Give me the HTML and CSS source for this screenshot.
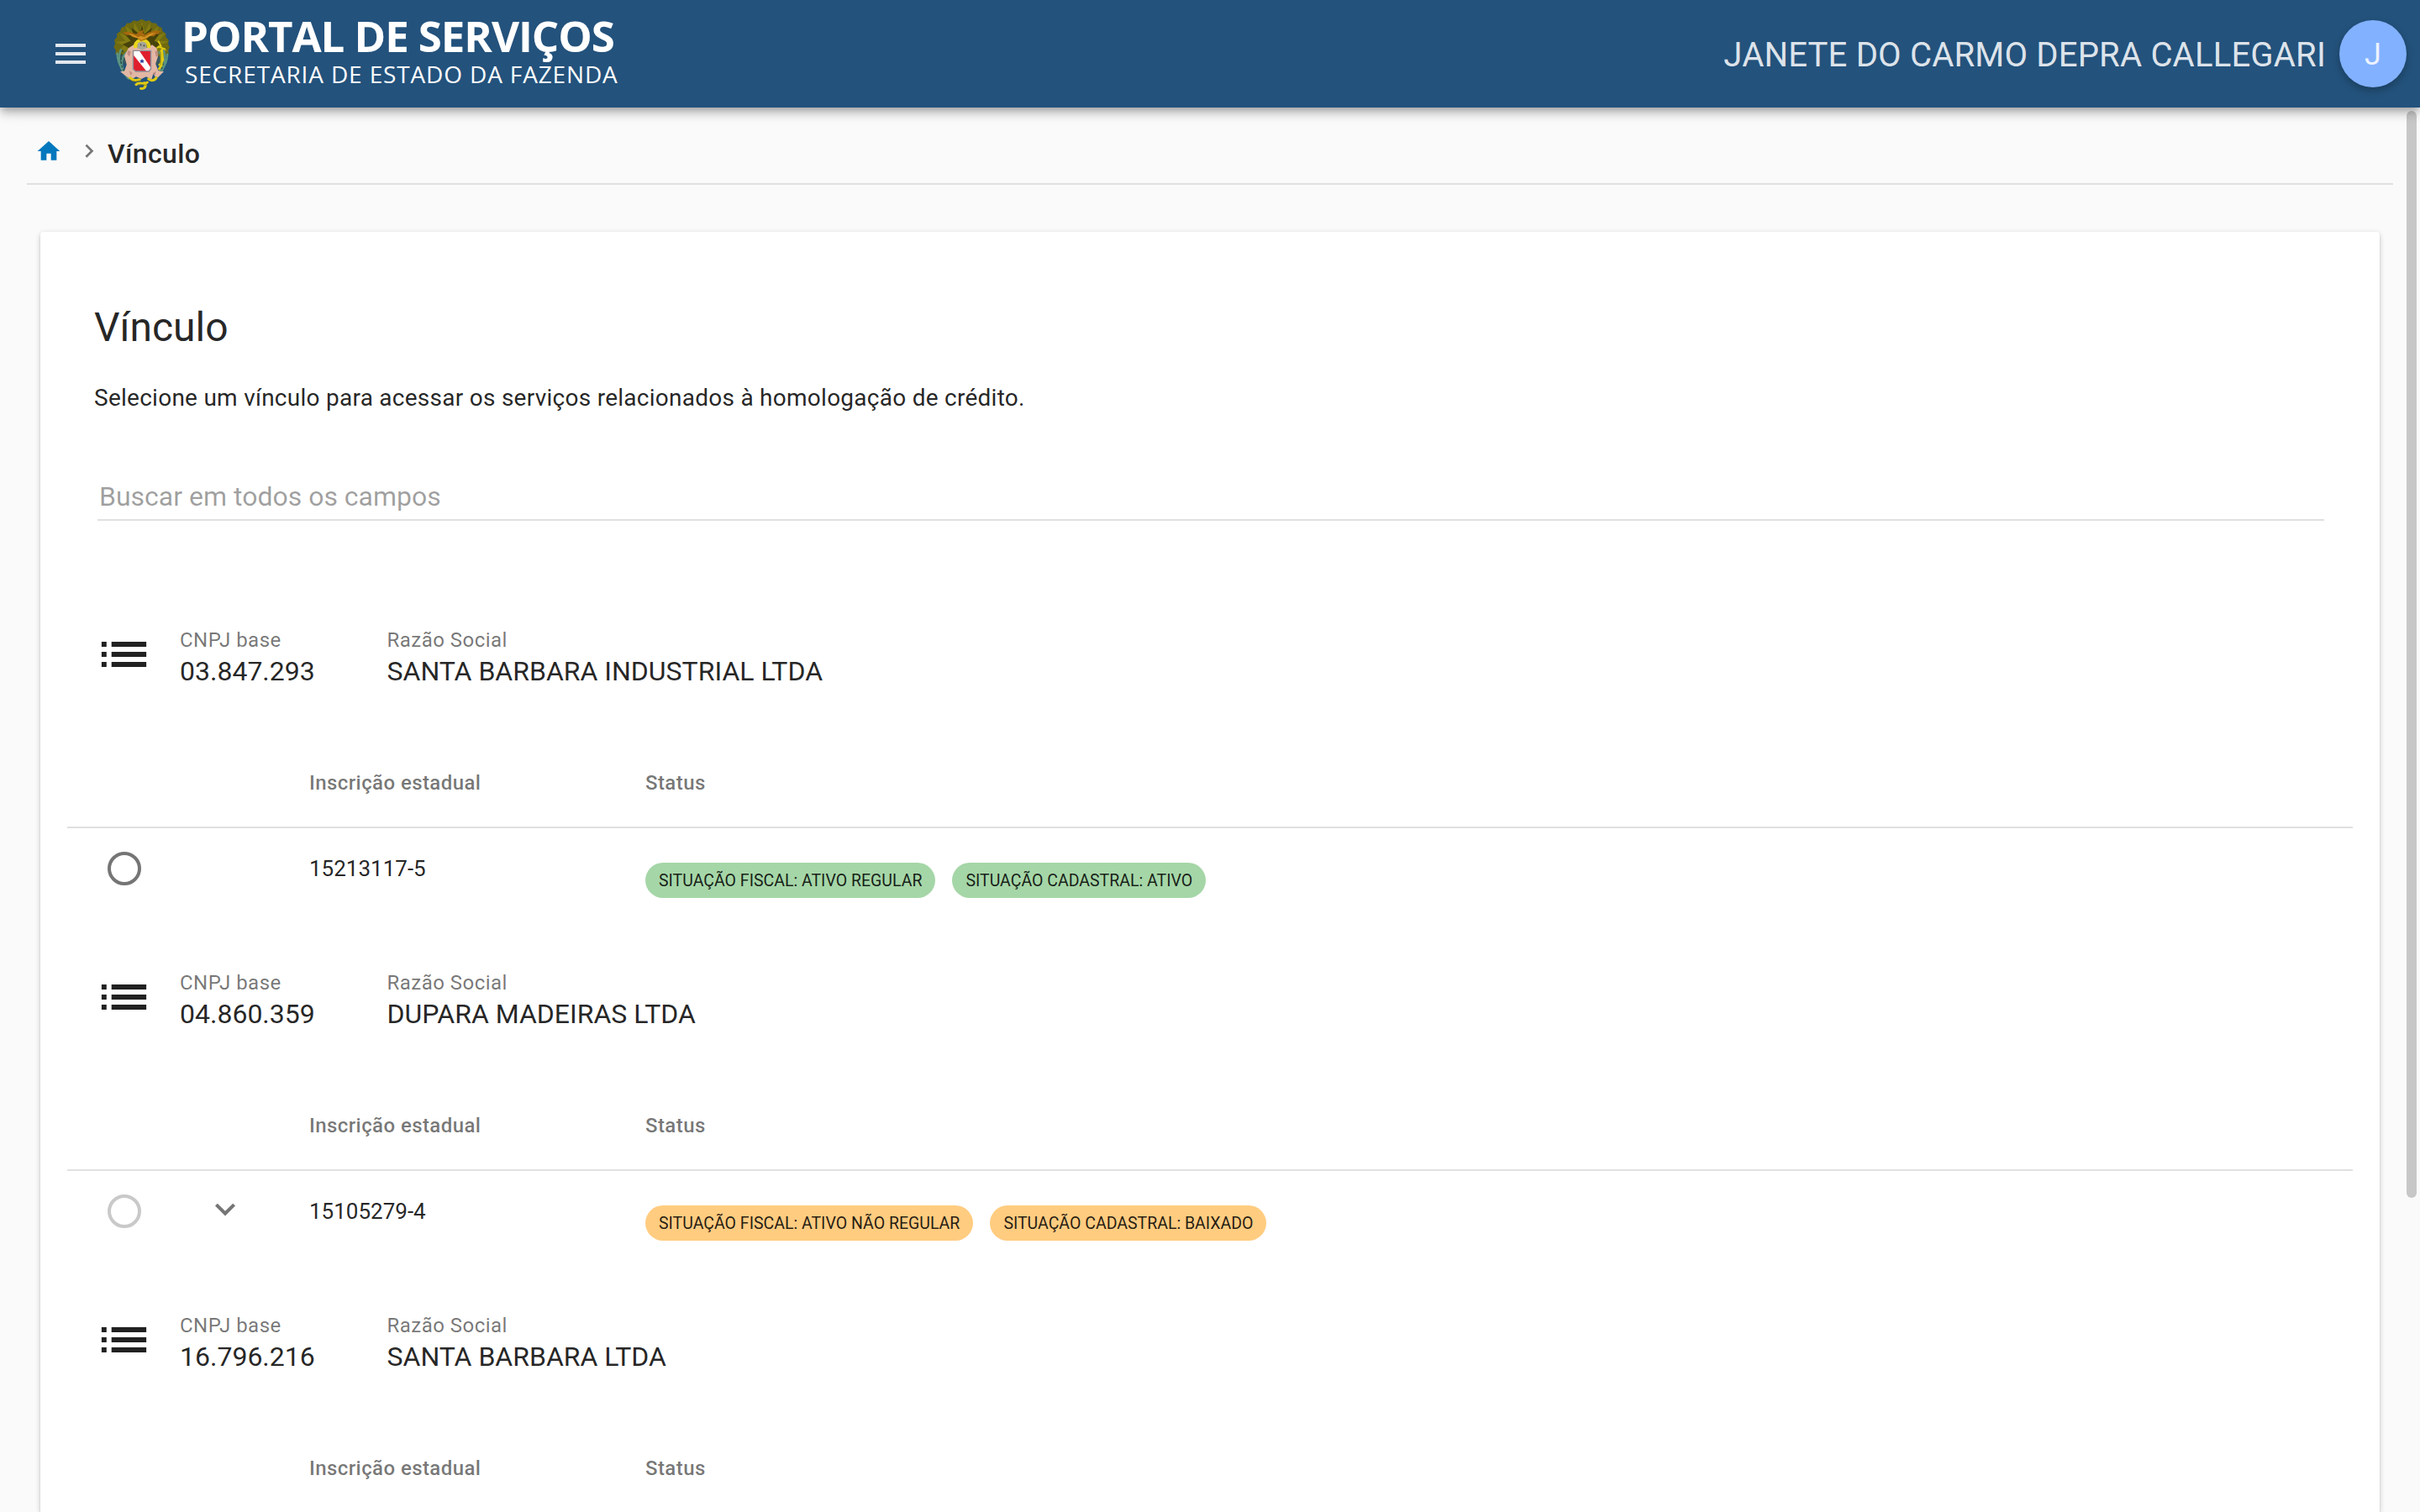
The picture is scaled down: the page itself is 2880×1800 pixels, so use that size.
FILE: index.html
```html
<!DOCTYPE html>
<html lang="pt-BR">
<head>
<meta charset="utf-8">
<title>Portal de Serviços</title>
<link rel="stylesheet" href="styles.css">
</head>
<body>
<svg class="defs" width="0" height="0">
  <symbol id="list" viewBox="0 0 24 24"><path d="M3 13h2v-2H3v2zm0 4h2v-2H3v2zm0-8h2V7H3v2zm4 4h14v-2H7v2zm0 4h14v-2H7v2zM7 7v2h14V7H7z"/></symbol>
</svg>
<header class="toolbar">
  <svg class="menu" viewBox="0 0 24 24"><path d="M3 18h18v-2H3v2zm0-5h18v-2H3v2zm0-7v2h18V6H3z"/></svg>
  <svg class="crest" viewBox="6 0 228 315" preserveAspectRatio="none">
    <path fill="#6f6a10" d="M120 38l12 8 13-3 9 9 14 1 6 11 13 5 3 13 11 8 0 13 10 10-3 13 6 12-5 12 2 13-8 10-4 14-14 9-22 8H76l-20-9-13-9-4-14-9-9 1-13-7-12 5-12-3-13 9-10 0-13 11-8 4-13 12-5 6-11 14-1 9-9 13 3z"/>
    <path fill="#8f8614" d="M120 46l9 40 18-36 2 38 28-26-12 38 34-12-22 28 34 2-30 14 30 22H38l22-22-30-12 34-4-22-28 34 12-12-38 28 26 2-38 18 36z" opacity=".65"/>
    <path fill="#2e2b08" d="M120 58l8 34 26-24-8 30 36-12-20 30 26 12-28 20H84l-30-20 28-12-24-28 34 10-8-30 28 24z" opacity=".7"/>
    <path fill="#23527c" d="M30 166h48v60l-14 8-34-40zm180 4h-48v56l14 8 34-40z" opacity=".75"/>
    <g fill="none" stroke="#5b9482" stroke-width="7" stroke-linecap="round" stroke-dasharray="8 5">
      <path d="M48 148c-12 34-4 72 28 104"/><path d="M66 158c-24 28-16 60 8 88"/><path d="M36 160c0 30 14 62 38 76"/>
      <path d="M194 152c10 34 2 70-30 102"/><path d="M178 156c20 28 14 62-10 90"/><path d="M206 164c-2 34-14 52-34 66"/>
    </g>
    <g fill="none" stroke="#254e45" stroke-width="4" stroke-linecap="round" stroke-dasharray="5 9">
      <path d="M55 150c-14 34-4 70 22 98"/><path d="M188 156c10 30 4 64-22 92"/>
    </g>
    <path fill="#e3b7a4" d="M74 142l18-12 14 10h34l14-10 16 12 4 30-8 26 10 26-18 10-6 20-18-10-16 8-18-8-16 10-6-20-18-8 8-26-8-30z"/>
    <path fill="#e3b7a4" d="M46 226l26-4 12 20-8 8zm122-4l26 4-20 20-12-4z"/>
    <path fill="#c08f84" d="M72 150l10 4-4 18-8-8zm92 4l8-4 4 16-8 8zM76 222l12 8-6 10zm80 10l12-8-6 16z"/>
    <path fill="#e9d51c" d="M92 142c-4-20 10-34 28-34s34 14 28 34l-12-2c2-12-6-20-16-20s-18 8-14 20z"/>
    <path fill="#a8a79a" d="M106 124l14-6 14 6 2 18-16 6-16-6z"/>
    <path fill="#5d5a56" d="M114 126h4v8h-4zm10 4h6v6h-6z"/>
    <path fill="#a8680e" d="M54 88c14-8 30-4 46 4l12-10 16-6-6 10 8 8c16-12 34-18 56-13l-10 5 6 5-14 1-8 8-16-1-10 12-18 6-14-12-14-2-6-8-16 0-4-4z"/>
    <path fill="#d49422" d="M74 91c12 0 22 4 32 12l10-4 12 4c12-10 24-16 38-15-14 6-22 16-36 20l-12 6-14-8c-10-2-20-8-30-15z"/>
    <g fill="none" stroke="#e0cb14" stroke-linecap="round">
      <path stroke-width="6" d="M176 118l8 16-12 6m16 8l4 38-14 16m-2-66l22 10"/>
      <path stroke-width="8" d="M186 150v52l-8 14"/>
      <path stroke-width="9" d="M80 248c8 10 20 10 32 6m-12 18c12-14 26 4 38-8m-22 22c14 4 20-12 12-20m14-14c8 8 22 6 26-4"/>
    </g>
    <path fill="none" stroke="#837808" stroke-width="2" d="M84 258c10 6 22 2 28 0m-4 18c10-8 22 2 30-4M183 156v46"/>
    <path fill="#8a8f98" d="M88 149h64v68l-8 10H98l-10-10z"/>
    <path fill="#e01f2d" d="M92 153h56v62l-6 8h-44l-6-8z"/>
    <path fill="#fff" d="M92 153h20l36 56v6l-6 8h-8L92 168z"/>
    <path fill="#2b3f9b" d="M120 180l2.500 5.500 6 .5-4.500 4 1.500 6-5.500-3.300-5.500 3.300 1.500-6-4.500-4 6-.5z"/>
  </svg>
  <div class="brand">
    <span class="brand-title">PORTAL DE SERVIÇOS</span>
    <span class="brand-sub">SECRETARIA DE ESTADO DA FAZENDA</span>
  </div>
  <span class="user">JANETE DO CARMO DEPRA CALLEGARI</span>
  <span class="avatar">J</span>
</header>

<nav class="breadcrumb">
  <svg class="home" viewBox="0 0 24 24"><path d="M10 20v-6h4v6h5v-8h3L12 3 2 12h3v8z"/></svg>
  <svg class="sep" viewBox="0 0 24 24"><path d="M8.590 16.340l4.580-4.590-4.580-4.590L10 5.750l6 6-6 6z"/></svg>
  <span class="crumb">Vínculo</span>
</nav>

<main class="card">
  <h1>Vínculo</h1>
  <p class="intro">Selecione um vínculo para acessar os serviços relacionados à homologação de crédito.</p>
  <div class="search">Buscar em todos os campos</div>

  <section class="group">
    <div class="company">
      <svg class="list" viewBox="0 0 24 24" preserveAspectRatio="none"><use href="#list" width="24" height="24"/></svg>
      <div class="cnpj"><small>CNPJ base</small><b>03.847.293</b></div>
      <div><small>Razão Social</small><b>SANTA BARBARA INDUSTRIAL LTDA</b></div>
    </div>
    <div class="thead"><span>Inscrição estadual</span><span>Status</span></div>
    <div class="row">
      <span class="radio"></span>
      <span class="expand"></span>
      <span class="number">15213117-5</span>
      <div class="chips"><span class="chip ok">SITUAÇÃO FISCAL: ATIVO REGULAR</span><span class="chip ok">SITUAÇÃO CADASTRAL: ATIVO</span></div>
    </div>
  </section>

  <section class="group">
    <div class="company">
      <svg class="list" viewBox="0 0 24 24" preserveAspectRatio="none"><use href="#list" width="24" height="24"/></svg>
      <div class="cnpj"><small>CNPJ base</small><b>04.860.359</b></div>
      <div><small>Razão Social</small><b>DUPARA MADEIRAS LTDA</b></div>
    </div>
    <div class="thead"><span>Inscrição estadual</span><span>Status</span></div>
    <div class="row">
      <span class="radio disabled"></span>
      <svg class="expand" viewBox="0 0 24 24"><path d="M7.410 7.840L12 12.420l4.590-4.580L18 9.250l-6 6-6-6z"/></svg>
      <span class="number">15105279-4</span>
      <div class="chips"><span class="chip warn">SITUAÇÃO FISCAL: ATIVO NÃO REGULAR</span><span class="chip warn">SITUAÇÃO CADASTRAL: BAIXADO</span></div>
    </div>
  </section>

  <section class="group">
    <div class="company">
      <svg class="list" viewBox="0 0 24 24" preserveAspectRatio="none"><use href="#list" width="24" height="24"/></svg>
      <div class="cnpj"><small>CNPJ base</small><b>16.796.216</b></div>
      <div><small>Razão Social</small><b>SANTA BARBARA LTDA</b></div>
    </div>
    <div class="thead"><span>Inscrição estadual</span><span>Status</span></div>
  </section>
</main>
<div class="scrollbar"></div>
</body>
</html>
```
FILE: styles.css
```css
* { box-sizing: border-box; }

body {
  margin: 0;
  height: 1800px;
  overflow: hidden;
  display: flex;
  flex-direction: column;
  background: #fafafa;
  color: rgba(0, 0, 0, .87);
  font-family: Roboto, sans-serif;
}

svg { display: block; flex: none; }
.defs { position: absolute; }

/* Toolbar */
.toolbar {
  position: relative;
  z-index: 2;
  flex: none;
  display: flex;
  align-items: flex-start;
  height: 128px;
  padding: 0 16px 0 60px;
  background: #23527c;
  color: rgba(255, 255, 255, .87);
  box-shadow: 0 4px 8px -2px rgba(0, 0, 0, .2), 0 8px 10px 0 rgba(0, 0, 0, .14), 0 2px 20px 0 rgba(0, 0, 0, .12);
}
.menu { width: 48px; height: 48px; margin-top: 40px; fill: currentColor; }
.crest { width: 80px; height: 105px; margin: 10px 0 0 21px; }
.brand {
  display: flex;
  flex-direction: column;
  margin-left: 7px;
  padding-top: 12px;
  color: #fff;
  font-family: "Open Sans", sans-serif;
  white-space: nowrap;
}
.brand-title { font-size: 51px; font-weight: 700; line-height: 60px; letter-spacing: -1.080px; }
.brand-sub { margin-left: 4px; font-size: 28px; line-height: 32px; letter-spacing: .850px; }
.user {
  margin: 41px 16px 0 auto;
  font-size: 40px;
  line-height: 50px;
  letter-spacing: .005em;
  white-space: nowrap;
}
.avatar {
  width: 80px;
  height: 80px;
  margin-top: 24px;
  border-radius: 50%;
  background: #82b1ff;
  font-size: 36px;
  line-height: 82px;
  text-align: center;
  box-shadow: 0 4px 10px rgba(0, 0, 0, .26);
}

/* Breadcrumb */
.breadcrumb {
  flex: none;
  display: flex;
  align-items: flex-start;
  height: 92px;
  margin: 0 32px;
  padding: 36px 0 0 10px;
  border-bottom: 2px solid #e0e0e0;
}
.home { width: 32px; height: 32px; fill: #0277bd; }
.sep { width: 32px; height: 32px; margin-left: 16px; fill: #757575; }
.crumb { margin: -1px 0 0 6px; font-size: 32px; font-weight: 500; line-height: 40px; letter-spacing: .012em; }

/* Card */
.card {
  flex: 1 0 auto;
  margin: 56px 48px 0;
  padding: 90px 32px 0;
  border-radius: 4px;
  background: #fff;
  box-shadow: 0 2px 6px 0 rgba(0, 0, 0, .2), 0 2px 2px 0 rgba(0, 0, 0, .14), 0 4px 2px -2px rgba(0, 0, 0, .12);
}
h1 { margin: 0 32px; font-size: 48px; font-weight: 400; line-height: 48px; }
.intro { margin: 40px 32px 0; font-size: 28px; line-height: 40px; letter-spacing: .260px; }
.search {
  height: 60px;
  margin: 66px 34px 94px 36px;
  padding: 10px 2px;
  border-bottom: 2px solid #e0e0e0;
  color: rgba(0, 0, 0, .38);
  font-size: 32px;
  line-height: 42px;
}

/* Company group */
.company { display: flex; align-items: flex-start; height: 166px; padding: 30px 0 0 31.500px; }
.company .list { width: 71px; height: 72px; margin: -1px 31.500px 0 0; fill: #212121; }
.company .cnpj { width: 246.500px; }
.company small { display: block; font-size: 24px; line-height: 36px; letter-spacing: .020em; color: rgba(0, 0, 0, .54); }
.company b { display: block; font-size: 32px; font-weight: 400; line-height: 38px; }
.thead {
  display: grid;
  grid-template-columns: 400px 1fr;
  height: 106px;
  padding-left: 288px;
  border-bottom: 2px solid #e0e0e0;
  color: rgba(0, 0, 0, .54);
  font-size: 24px;
  font-weight: 500;
  line-height: 104px;
  letter-spacing: .420px;
}
.row {
  display: grid;
  grid-template-columns: 116px 124px 400px 1fr;
  align-items: start;
  height: 136px;
  padding-left: 48px;
}
.radio { width: 40px; height: 40px; margin-top: 28px; border: 4px solid #757575; border-radius: 50%; }
.radio.disabled { border-color: #c9c9c9; }
.expand { width: 48px; height: 48px; margin-top: 23px; fill: #757575; }
.number { margin-top: 28px; font-size: 26px; line-height: 40px; }
.chips { display: flex; gap: 20px; margin-top: 41px; }
.chip { height: 42px; padding: 0 16px; border-radius: 21px; font-size: 19.500px; line-height: 44px; white-space: nowrap; }
.chip.ok { background: #a5d6a7; }
.chip.warn { background: #ffcc80; }

/* Overlay scrollbar */
.scrollbar {
  position: absolute;
  top: 132px;
  right: 4px;
  width: 12px;
  height: 1294px;
  border-radius: 6px;
  background: #c7c7c7;
}
```
